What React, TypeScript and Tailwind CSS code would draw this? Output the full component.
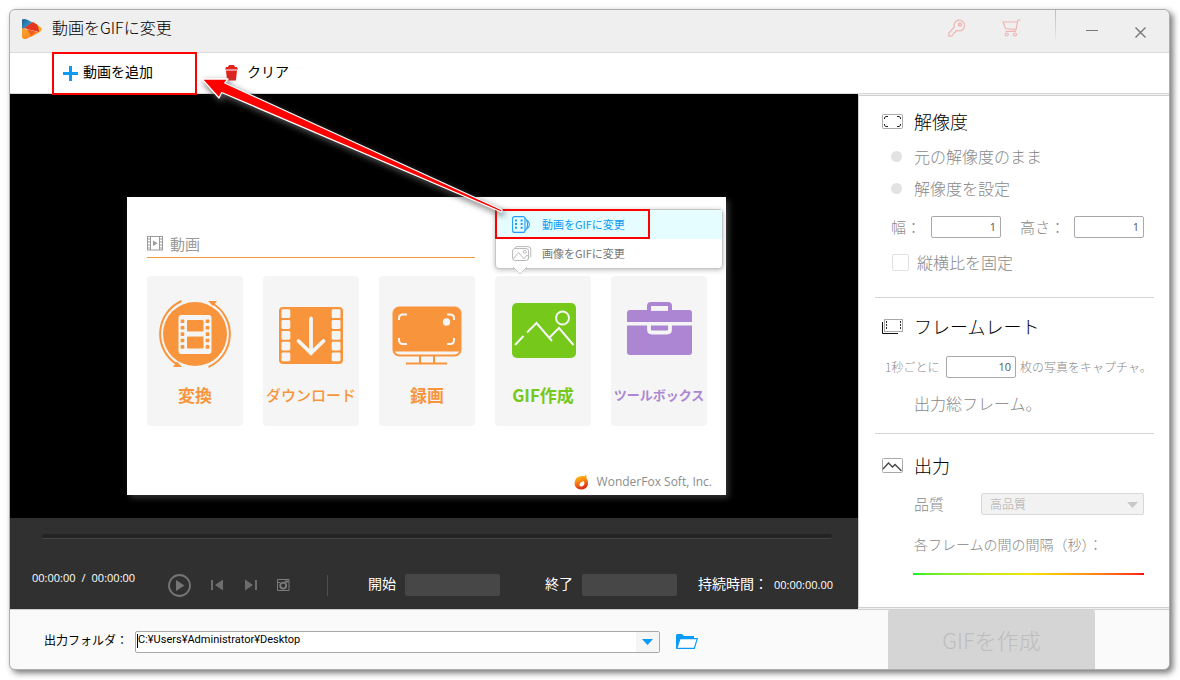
import React from "react";

const orange = "#f8953c";
const pale = "#f5f5f5";

function LogoIcon() {
  return (
    <svg width="20" height="20" viewBox="0 0 20 20" aria-hidden="true">
      <defs>
        <linearGradient id="logoBlue" x1="0" y1="0" x2="1" y2="1">
          <stop offset="0" stopColor="#1b5f92" />
          <stop offset="1" stopColor="#4bb6e6" />
        </linearGradient>
        <linearGradient id="logoOrange" x1="0" y1="0" x2="1" y2="1">
          <stop offset="0" stopColor="#f9a72c" />
          <stop offset="1" stopColor="#f47b20" />
        </linearGradient>
      </defs>
      <path d="M0 1 Q0 0 2 0 Q5 0 11 4 L0 11 Z" fill="url(#logoBlue)" />
      <path d="M14 5.5 Q20 8 20 10 Q20 12 16 14 Z" fill="#f0b32c" />
      <path d="M11 3 L15 5.5 Q17.5 9 17 13 L5 10 L2 9 Z" fill="#e6361f" />
      <path d="M0 9 L4 10.5 L17 13.5 Q9 18 4 20 Q0 20 0 18 Z" fill="url(#logoOrange)" />
      <path d="M5 10 L14 12.8 L9 17 Z" fill="#f0601f" />
    </svg>
  );
}

function KeyIcon() {
  return (
    <svg width="18" height="18" viewBox="0 0 18 18" fill="none" stroke="#f1b5b3" strokeWidth="1.2" aria-hidden="true">
      <path d="M6.3 8.2 A5.3 5.3 0 1 1 9.6 11.5 L8.1 11.6 L7.7 13 L6.2 13.3 L5.6 14.8 L3.8 16.8 L.8 17 L.9 14 Z" />
      <circle cx="12" cy="5.5" r="1.6" fill="#f1b5b3" fillOpacity=".5" />
    </svg>
  );
}

function CartIcon() {
  return (
    <svg width="19" height="18" viewBox="0 0 19 18" fill="none" stroke="#f1b5b3" strokeWidth="1.2" aria-hidden="true">
      <path d="M18.5 1 H16 L14 10.5 L3.5 9.5 L1 3 H15.3 M14 10.5 L13.2 12.3 H3.5" />
      <circle cx="4.7" cy="15.5" r="1.5" />
      <circle cx="13" cy="15.5" r="1.5" />
    </svg>
  );
}

function ConvertIcon() {
  const holes = [0, 1, 2, 3, 4];
  return (
    <svg width="74" height="68" viewBox="0 0 74 68" aria-hidden="true">
      <circle cx="37" cy="34" r="32" fill={orange} />
      <path d="M23.5 1 A36 36 0 0 0 20 65" fill="none" stroke={orange} strokeWidth="2" />
      <path d="M50.5 67 A36 36 0 0 0 54 3" fill="none" stroke={orange} strokeWidth="2" />
      <path d="M24 67 L15 67 L19 61.5 Z M50 1 L59 1 L55 6 Z" fill={orange} />
      <rect x="20.5" y="15" width="33" height="39" rx="3" fill={pale} />
      <rect x="29" y="20" width="16.5" height="11.5" rx="1" fill={orange} />
      <rect x="29" y="36.5" width="16.5" height="12" rx="1" fill={orange} />
      {holes.map((i) => (
        <g key={i} fill={orange}>
          <rect x="22.7" y={19.5 + i * 6.4} width="3.6" height="3.6" rx=".6" />
          <rect x="47.7" y={19.5 + i * 6.4} width="3.6" height="3.6" rx=".6" />
        </g>
      ))}
    </svg>
  );
}

function DownloadIcon() {
  const holes = [0, 1, 2, 3, 4];
  return (
    <svg width="64" height="57" viewBox="0 0 64 57" aria-hidden="true">
      <rect width="64" height="57" rx="4" fill={orange} />
      {holes.map((i) => (
        <g key={i} fill={pale}>
          <rect x="2.5" y={2.3 + i * 10.8} width="8.8" height="8.8" rx="1.4" />
          <rect x="52.7" y={2.3 + i * 10.8} width="8.8" height="8.8" rx="1.4" />
        </g>
      ))}
      <path d="M32 11.5 V45 M19.5 34 L32 46 L44.5 34" fill="none" stroke={pale} strokeWidth="3.8" strokeLinecap="round" />
    </svg>
  );
}

function RecordIcon() {
  return (
    <svg width="70" height="59" viewBox="0 0 70 59" aria-hidden="true">
      <rect x="1" y="1" width="68" height="49" rx="6" fill={orange} stroke={orange} strokeWidth="1" />
      <path d="M3 45.5 H67 Q66 48.5 62 48.5 H8 Q4 48.5 3 45.5" fill={pale} />
      <path d="M28 50 V57 M42 50 V57 M14 57.5 H55" fill="none" stroke={orange} strokeWidth="2" />
      <g fill="none" stroke={pale} strokeWidth="2">
        <path d="M7 14 V12 Q7 8.5 11 8.5 H15" />
        <path d="M55 8.5 H58 Q62 8.5 62 12 V14" />
        <path d="M7 32 V34 Q7 38 11 38 H15" />
        <path d="M62 32 V34 Q62 38 58 38 H55" />
      </g>
      <circle cx="54.5" cy="16" r="3.7" fill={pale} />
    </svg>
  );
}

function PictureIcon() {
  return (
    <svg width="64" height="55" viewBox="0 0 64 55" aria-hidden="true">
      <rect width="64" height="55" rx="5" fill="#76c91b" />
      <g fill="none" stroke={pale} strokeWidth="2">
        <path d="M3 42 L11.5 33 M15 29.5 L24.5 20 L40 38 M37.5 34.5 L47 25 L61.5 42" />
        <circle cx="50.5" cy="15" r="6.5" />
      </g>
    </svg>
  );
}

function ToolboxIcon() {
  return (
    <svg width="65" height="53" viewBox="0 0 65 53" aria-hidden="true">
      <path d="M22 9 V4 Q22 2 24 2 H41 Q43 2 43 4 V9" fill="none" stroke="#ad86d3" strokeWidth="4" />
      <rect y="8" width="65" height="45" rx="3" fill="#ad86d3" />
      <path d="M24 8.4 H41" stroke={pale} strokeWidth="1" />
      <path d="M0 21.8 H65" stroke={pale} strokeWidth="3.6" />
      <path d="M22 22 V27.5 Q22 30.5 25 30.5 H40 Q43 30.5 43 27.5 V22" fill="none" stroke={pale} strokeWidth="3.8" />
    </svg>
  );
}

function FilmSmallIcon() {
  return (
    <svg width="16" height="15" viewBox="0 0 16 15" fill="none" stroke="#9b9b9b" aria-hidden="true">
      <rect x=".5" y=".5" width="15" height="13.5" />
      <path d="M3.5 .5 V14 M12.5 .5 V14" />
      <path d="M0 3 H3.5 M0 6 H3.5 M0 9 H3.5 M0 12 H3.5 M12.5 3 H16 M12.5 6 H16 M12.5 9 H16 M12.5 12 H16" />
      <path d="M6 4.5 L10.5 7.3 L6 10 Z" fill="#9b9b9b" stroke="none" />
    </svg>
  );
}

function ClipIcon() {
  return (
    <svg width="18" height="17" viewBox="0 0 18 17" fill="none" stroke="#249ef5" strokeWidth="1.1" aria-hidden="true">
      <rect x=".6" y=".6" width="12.4" height="15.8" rx="2" />
      <path d="M4 3.5 V14 M9.6 3.5 V14" strokeWidth="2" strokeDasharray="2 1.6" />
      <path d="M13 2.5 Q15.5 4 15.5 8.5 Q15.5 13 13 14.5 M15.3 4.5 Q17.4 6 17.4 8.5 Q17.4 11 15.3 12.5" />
    </svg>
  );
}

function ImagesIcon() {
  return (
    <svg width="20" height="15" viewBox="0 0 20 15" fill="none" stroke="#b9b9b9" aria-hidden="true">
      <rect x=".6" y="2.5" width="16" height="12" rx="2.5" />
      <path d="M3 2 Q3.5 .6 5 .6 H16 Q18.8 .6 18.8 3.4 V11.5" />
      <path d="M1.5 12.5 L6.5 6.5 L12 12.8 L15 9 L17 11.5" />
      <circle cx="12.8" cy="5.8" r="1.5" />
    </svg>
  );
}

function FoxIcon() {
  return (
    <svg width="15" height="16" viewBox="0 0 15 16" aria-hidden="true">
      <defs>
        <linearGradient id="foxFill" x1="0" y1="0" x2=".3" y2="1">
          <stop offset="0" stopColor="#ffd21a" />
          <stop offset=".5" stopColor="#f98b14" />
          <stop offset="1" stopColor="#dc2f12" />
        </linearGradient>
      </defs>
      <path d="M3 3.5 Q7 1.5 10.5 2.2 L12.3 .5 L12.6 4.3 Q14.6 7 14 10.5 Q12.5 15.6 7 15.6 Q1 15 .5 9.5 Q.4 6 3 3.5 Z" fill="url(#foxFill)" />
      <path d="M5.5 12 Q5 8.5 9.3 7 Q11.5 9 9.5 11.5 Q7.8 13 5.5 12" fill="#fff" />
    </svg>
  );
}

function Section({ icon, title, children }: { icon: React.ReactNode; title: string; children: React.ReactNode }) {
  return (
    <>
      <div className="flex h-[26px] items-center gap-[11px]">
        {icon}
        <h2 className="text-[18px] leading-[26px] font-light text-black">{title}</h2>
      </div>
      {children}
    </>
  );
}

const tiles = [
  { label: "変換", iconBox: "pt-6", style: "text-[17px] font-bold text-[#f8953c]", icon: <ConvertIcon /> },
  { label: "ダウンロード", iconBox: "pt-[31px]", style: "text-[15px] font-medium text-[#f8953c]", icon: <DownloadIcon /> },
  { label: "録画", iconBox: "pt-[30px]", style: "text-[17px] font-bold text-[#f8953c]", icon: <RecordIcon /> },
  { label: "GIF作成", iconBox: "pt-[27px] pl-[2px]", style: "text-[17px] font-bold text-[#76c91b]", icon: <PictureIcon /> },
  { label: "ツールボックス", iconBox: "pt-[26px]", style: "text-[13px] font-bold text-[#ad86d3]", icon: <ToolboxIcon /> },
];

function Preview() {
  return (
    <div className="flex-1 bg-black pt-[103px] pr-[132px] pb-[23px] pl-[117px]">
      <div className="relative flex h-[298px] w-[599px] flex-col bg-white pt-[36px] pr-[14px] pl-5 shadow-[3px_3px_6px_#333]">
        <div className="flex h-[25px] w-[328px] items-start gap-[7px] border-b border-[#f8953c] text-[15px] leading-[21px] font-normal text-[#999]">
          <span className="pt-[3px]">
            <FilmSmallIcon />
          </span>
          <span>動画</span>
        </div>
        <div className="mt-[18px] flex gap-5">
          {tiles.map((t) => (
            <a
              key={t.label}
              href="#"
              className="flex h-[150px] w-[96px] shrink-0 flex-col items-center rounded bg-[#f5f5f5] whitespace-nowrap"
            >
              <span className={`flex h-[107px] shrink-0 items-start ${t.iconBox}`}>{t.icon}</span>
              <span className={`leading-6 ${t.style}`}>{t.label}</span>
            </a>
          ))}
        </div>
        <div className="mt-12 flex items-center justify-end gap-2 font-['Open_Sans',sans-serif] text-[12px] leading-4 font-normal text-[#8c8c8c]">
          <FoxIcon />
          <span>WonderFox Soft, Inc.</span>
        </div>
        <div className="absolute top-[12px] left-[368px] w-[228px] rounded border border-[#c6c6c6] bg-white font-normal shadow-[0_1px_5px_#bbb]">
          <a href="#" className="relative flex h-[29px] items-center gap-[12px] bg-[#e6fdff] pl-4 text-[11px] text-[#0a9bf5]">
            <span className="flex w-[18px]">
              <ClipIcon />
            </span>
            <span>動画をGIFに変更</span>
            <span className="absolute -top-px -left-px h-[30px] w-[155px] border-2 border-[#fe0000]" />
          </a>
          <a href="#" className="flex h-[29px] items-center gap-[10px] pl-4 text-[11px] text-[#777]">
            <span className="flex w-[20px]">
              <ImagesIcon />
            </span>
            <span>画像をGIFに変更</span>
          </a>
          <svg className="absolute top-[57px] left-[17px]" width="14" height="8" viewBox="0 0 14 8" aria-hidden="true">
            <path d="M0 0 L7 7 L14 0" fill="#fff" stroke="#c6c6c6" />
          </svg>
        </div>
      </div>
    </div>
  );
}

function Player() {
  return (
    <div className="h-[91px] bg-[#303030] pt-[16px] font-normal text-white">
      <div className="mr-[26px] ml-[32px] h-[5px] rounded-full border-b border-[#454545] bg-[#242424]" />
      <div className="mt-[28px] flex h-9 items-center pl-[22px] text-[14px] whitespace-nowrap">
        <div className="flex w-[136px] gap-[6px] self-start font-['Open_Sans',sans-serif] text-[11px] leading-[22px]">
          <span>00:00:00</span>
          <span>/</span>
          <span>00:00:00</span>
        </div>
        <button type="button" aria-label="再生">
          <svg width="23" height="23" viewBox="0 0 23 23" aria-hidden="true">
            <circle cx="11.5" cy="11.5" r="10.5" fill="none" stroke="#757575" strokeWidth="1.8" />
            <path d="M8 6 L16.5 11.5 L8 17 Z" fill="#757575" />
          </svg>
        </button>
        <button type="button" aria-label="前へ" className="ml-5">
          <svg width="13" height="12" viewBox="0 0 13 12" fill="#6d6d6d" aria-hidden="true">
            <path d="M0 1 H2 V11 H0 Z M12 .5 V11.5 L4 6 Z" />
          </svg>
        </button>
        <button type="button" aria-label="次へ" className="ml-[21px]">
          <svg width="13" height="12" viewBox="0 0 13 12" fill="#6d6d6d" aria-hidden="true">
            <path d="M10 1 H12 V11 H10 Z M0 .5 V11.5 L8 6 Z" />
          </svg>
        </button>
        <button type="button" aria-label="スナップショット" className="ml-[19px]">
          <svg width="13" height="12" viewBox="0 0 13 12" fill="none" stroke="#7d7d7d" aria-hidden="true">
            <path d="M.5 .5 H12 V11.5 H.5 Z M.5 3.5 H3" />
            <circle cx="6.2" cy="6.6" r="3" strokeWidth="1.8" />
            <path d="M8 2.5 H11.5" strokeWidth="2" />
          </svg>
        </button>
        <span className="ml-[37px] h-[21px] w-px bg-[#4e4e4e]" />
        <label htmlFor="start" className="ml-10 pb-[3px]">開始</label>
        <input id="start" type="text" className="ml-[9px] h-[22px] w-[95px] rounded-xs bg-[#474747] px-1" />
        <label htmlFor="end" className="ml-[45px] pb-[3px]">終了</label>
        <input id="end" type="text" className="ml-[9px] h-[22px] w-[95px] rounded-xs bg-[#474747] px-1" />
        <span className="ml-[21px] pb-[3px]">持続時間：</span>
        <span className="ml-[6px] font-['Open_Sans',sans-serif] text-[11px]">00:00:00.00</span>
      </div>
    </div>
  );
}

const numberBox =
  "h-[22px] w-[70px] rounded-xs border border-[#a9a9a9] bg-white pr-1 pb-px text-right font-['Open_Sans',sans-serif] text-[11px] font-normal text-[#555]";
const radioDot = "mr-[12px] size-[11px] appearance-none rounded-full bg-[#e2e2e2]";

function Sidebar() {
  return (
    <aside className="my-px flex w-[311px] flex-col border border-r-0 border-[#cfcfcf] bg-white px-4 pr-[15px] text-[#888] whitespace-nowrap">
      <section className="h-[202px] border-b border-[#d4d4d4] pt-[12px] pl-[7px]">
        <Section
          title="解像度"
          icon={
            <svg width="21" height="15" viewBox="0 0 21 15" fill="none" aria-hidden="true">
              <rect x=".5" y=".5" width="20" height="14" rx="1" stroke="#aaa" />
              <path d="M2.5 5 V3.5 L4 2.5 H6 M15 2.5 H17 L18.5 3.5 V5 M2.5 10 V11.5 L4 12.5 H6 M15 12.5 H17 L18.5 11.5 V10" stroke="#222" />
            </svg>
          }
        >
          <label className="mt-[6px] flex h-8 items-center pl-[9px] text-[16px]">
            <input type="radio" name="resolution" className={radioDot} />
            元の解像度のまま
          </label>
          <label className="flex h-8 items-center pl-[9px] text-[16px]">
            <input type="radio" name="resolution" className={radioDot} />
            解像度を設定
          </label>
          <div className="flex h-[46px] items-center pl-[9px] text-[15px]">
            <label htmlFor="width" className="w-10">幅：</label>
            <input id="width" type="text" defaultValue="1" className={numberBox} />
            <label htmlFor="height" className="ml-[19px] w-[54px]">高さ：</label>
            <input id="height" type="text" defaultValue="1" className={numberBox} />
          </div>
          <label className="flex h-6 items-center gap-2 pl-[10px] text-[16px]">
            <input type="checkbox" className="size-[17px] appearance-none rounded-xs border border-[#e2e2e2] bg-white" />
            縦横比を固定
          </label>
        </Section>
      </section>
      <section className="h-[136px] border-b border-[#d4d4d4] pt-[15px] pl-[7px]">
        <Section
          title="フレームレート"
          icon={
            <svg width="21" height="15" viewBox="0 0 21 15" fill="none" aria-hidden="true">
              <rect x="2.5" y=".5" width="18" height="12" stroke="#aaa" />
              <path d="M.5 3 V14.5 H16" stroke="#111" />
              <path d="M4.5 2 V11 M18.5 2 V11" stroke="#333" strokeDasharray="2 1" />
            </svg>
          }
        >
          <div className="flex h-[56px] items-center pl-[3px] text-[12px]">
            <label htmlFor="fps" className="w-[61px]">1秒ごとに</label>
            <input id="fps" type="text" defaultValue="10" className={numberBox} />
            <span className="ml-1">枚の写真をキャプチャ。</span>
          </div>
          <p className="pl-8 text-[16px] leading-4">出力総フレーム。</p>
        </Section>
      </section>
      <section className="pt-[18px] pl-[7px]">
        <Section
          title="出力"
          icon={
            <svg width="21" height="15" viewBox="0 0 21 15" fill="none" aria-hidden="true">
              <rect x=".5" y=".5" width="20" height="14" rx="1" stroke="#aaa" />
              <path d="M1 11 L6.5 5 L10.5 9 L13 6.5 L19.5 13" stroke="#444" strokeWidth="1.3" />
            </svg>
          }
        >
          <div className="flex h-[52px] items-center pl-8 text-[15px]">
            <label htmlFor="quality" className="w-[67px]">品質</label>
            <div className="relative flex h-[22px] w-[163px]">
              <select
                id="quality"
                disabled
                className="h-full w-full appearance-none rounded-xs border border-[#d8d8d8] bg-[#f2f2f2] pl-2 text-[12px] text-[#aaa]"
              >
                <option>高品質</option>
              </select>
              <svg className="absolute top-[9px] right-[6px]" width="11" height="6" viewBox="0 0 11 6" aria-hidden="true">
                <path d="M0 0 H11 L5.5 6 Z" fill="#c8c8c8" />
              </svg>
            </div>
          </div>
          <p className="pl-8 text-[14px] leading-7">各フレームの間の間隔（秒）：</p>
          <div className="mt-[15px] mr-[10px] ml-[31px] h-[2px] bg-linear-to-r from-[#00f02c] via-[#f5e400] to-[#ff0018]" />
        </Section>
      </section>
    </aside>
  );
}

export default function App() {
  return (
    <div className="relative min-h-screen bg-white p-[9px] pr-[10px] font-['Noto_Sans_CJK_JP',sans-serif] font-light text-black">
      <main className="flex flex-col overflow-visible rounded-md border border-[#adadad] bg-[#f0f0f0] shadow-[3px_3px_6px_#777]">
        <header className="flex h-[43px] items-start rounded-t-md border-b border-[#dadada] bg-[#efefef] pl-3 whitespace-nowrap">
          <span className="pt-[9px]">
            <LogoIcon />
          </span>
          <h1 className="ml-[10px] flex-1 pt-1 text-[16px] leading-[26px] font-light">動画をGIFに変更</h1>
          <button type="button" aria-label="登録" className="mt-[9px] mr-9">
            <KeyIcon />
          </button>
          <button type="button" aria-label="購入" className="mt-[9px] mr-[34px]">
            <CartIcon />
          </button>
          <span className="h-[34px] w-px bg-linear-to-b from-[#bbb] to-[#efefef]" />
          <button type="button" aria-label="最小化" className="mt-5 ml-[30px] h-px w-3 bg-[#777]" />
          <button type="button" aria-label="閉じる" className="mt-[17px] mr-[23px] ml-[37px]">
            <svg width="11" height="11" viewBox="0 0 11 11" stroke="#777" strokeWidth="1.4" aria-hidden="true">
              <path d="M.5 .5 L10.5 10.5 M10.5 .5 L.5 10.5" />
            </svg>
          </button>
        </header>

        <nav className="flex h-[41px] items-center border-b border-[#d9d9d9] bg-white pl-[43px] text-[14px] font-normal">
          <button type="button" className="relative flex h-full w-[144px] items-center gap-[5px] pl-[10px]">
            <svg width="15" height="15" viewBox="0 0 15 15" aria-hidden="true">
              <path d="M6 0 H9 V6 H15 V9 H9 V15 H6 V9 H0 V6 H6 Z" fill="#0a9bf5" />
            </svg>
            <span className="pb-1">動画を追加</span>
            <span className="absolute -top-px right-0 -bottom-[2px] -left-px border-2 border-[#fe0000]" />
          </button>
          <button type="button" className="ml-[28px] flex h-full items-center gap-[9px]">
            <svg width="13" height="16" viewBox="0 0 13 16" fill="#dd241e" aria-hidden="true">
              <path d="M4 0 H9 L10 2 H12 L13 4.5 H0 L1 2 H3 Z M1 5.5 H12 L11 15 Q11 15.5 10 15.5 H3 Q2 15.5 2 15 Z" />
            </svg>
            <span className="pb-1">クリア</span>
          </button>
        </nav>

        <div className="flex">
          <div className="flex min-w-0 flex-1 flex-col">
            <Preview />
            <Player />
          </div>
          <Sidebar />
        </div>

        <footer className="flex h-[60px] items-center rounded-b-md border-t border-[#cfcfcf] bg-[#fafafa] pl-[34px] text-[12px] font-normal whitespace-nowrap">
          <label htmlFor="folder" className="w-[91px]">出力フォルダ：</label>
          <div className="relative mt-1 flex h-[22px] w-[525px] rounded-xs border border-[#a9a9a9] bg-white">
            <input
              id="folder"
              type="text"
              defaultValue="C:¥Users¥Administrator¥Desktop"
              className="min-w-0 flex-1 pb-[3px] pl-[2px] font-[Roboto,sans-serif] text-[11px] leading-4 font-normal outline-none"
            />
            <span className="absolute top-[2px] left-px h-[14px] w-px bg-black" />
            <button type="button" aria-label="フォルダを選択" className="flex w-[23px] items-center justify-center bg-[#f5f5f5] pt-px">
              <svg width="11" height="6" viewBox="0 0 11 6" aria-hidden="true">
                <path d="M0 0 H11 L5.5 6 Z" fill="#0a9bf5" />
              </svg>
            </button>
          </div>
          <button type="button" aria-label="フォルダを開く" className="mt-1 ml-4">
            <svg width="22" height="15" viewBox="0 0 22 15" aria-hidden="true">
              <path d="M0 1.5 Q0 0 1.5 0 H6 L8 2 H18 V4.5 H4 L1 14 H0 Z" fill="#0a9bf5" />
              <path d="M4 4.6 H21.3 L18.3 14.4 H.8 Z" fill="#fff" stroke="#0a9bf5" strokeWidth="1.2" />
            </svg>
          </button>
          <button
            type="button"
            disabled
            className="mr-[74px] ml-auto h-full w-[207px] rounded-t-xs bg-[#d5d5d5] text-[22px] font-light text-[#bdbdbd]"
          >
            GIFを作成
          </button>
        </footer>
      </main>

      <svg
        className="pointer-events-none absolute top-0 left-0 drop-shadow-[2px_3px_3px_#555]"
        width="520"
        height="230"
        viewBox="0 0 520 230"
        aria-hidden="true"
      >
        <path
          d="M202 79 L228 79 L224.8 83 L502.3 210 L501.3 212 L221.7 92.5 L219 98 Z"
          fill="#fe0000"
          stroke="#fff"
          strokeWidth="1.3"
          strokeLinejoin="round"
        />
      </svg>
    </div>
  );
}
